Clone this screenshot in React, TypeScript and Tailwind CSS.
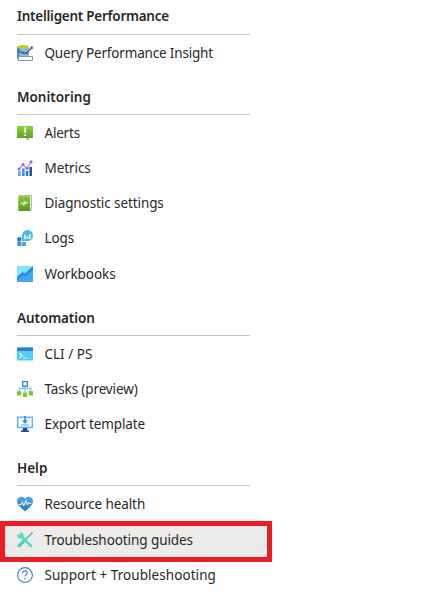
import type { ReactNode } from "react";

const Svg = ({ children }: { children: ReactNode }) => (
  <svg viewBox="0 0 16 16" className="h-4 w-4 shrink-0" fill="none">
    {children}
  </svg>
);

const QueryIcon = () => (
  <Svg>
    <path d="M0 2h12v12H0z" fill="#74c3ea" />
    <path d="M0 2h2.500v12H0z" fill="#3d9bd1" />
    <ellipse cx="6.200" cy="1.900" rx="5.800" ry="1.900" fill="#b5d22c" />
    <path d="M1.500 6l4.500 2 3.500.2L14.500 3" stroke="#7b48ae" strokeWidth="1.500" />
    <path d="M.5 4.800h2.200V7H.500zM5 6.800h2.200V9H5zM8.500 7h2.300v2.200H8.500zM13.500 1.500h2.300v2.600h-2.300z" fill="#7b48ae" />
    <path d="M1.500 11.500h14v4h-14z" fill="#fff" stroke="#939393" />
  </Svg>
);

const AlertIcon = () => (
  <Svg>
    <defs>
      <linearGradient id="alert" x1="0" y1="0" x2="0" y2="1">
        <stop stopColor="#86d633" />
        <stop offset="1" stopColor="#5e9624" />
      </linearGradient>
    </defs>
    <path d="M.5 1h15q.5 0 .5.500v11q0 .5-.5.5h-4v2.200L8.800 13H.5q-.5 0-.5-.5v-11Q0 1 .5 1z" fill="url(#alert)" />
    <path d="M7 2.500h2.200l-.3 5.500H7.300zM7.100 9.200h2v1.800h-2z" fill="#fff" />
  </Svg>
);

const MetricsIcon = () => (
  <Svg>
    <path d="M1 11h2.800v5H1z" fill="#6aaef0" />
    <path d="M5 8.500h2.600V16H5z" fill="#3c91e6" />
    <path d="M8.700 11h2.600v5H8.700z" fill="#2b76c5" />
    <path d="M12.400 7H15v9h-2.600z" fill="#1859a5" />
    <path d="M2 9l4-4.500 4 4L14 2" stroke="#b08af5" strokeWidth="1.200" />
    <g fill="#9264e6">
      <circle cx="2" cy="9" r="1.500" />
      <circle cx="6" cy="4.500" r="1.500" />
      <circle cx="10" cy="8.300" r="1.500" />
      <circle cx="14" cy="1.800" r="1.600" />
    </g>
  </Svg>
);

const DiagnosticIcon = () => (
  <Svg>
    <defs>
      <linearGradient id="diag" x1="0" y1="0" x2="0" y2="1">
        <stop stopColor="#83cc31" />
        <stop offset="1" stopColor="#5b9423" />
      </linearGradient>
    </defs>
    <path d="M2 0h12.800v14.500L13 16H2z" fill="#7aa84a" />
    <path d="M2.500.6H14.200v14h-1.200V1.400H2.500z" fill="#f0f7e6" />
    <path d="M1.300 1.300H13V16H2.200q-.9 0-.9-.9z" fill="url(#diag)" />
    <path d="M3.500 9h1.300l1-2 1 3.500 1.500-4.500.8 3 .7-1.300h1.200" stroke="#fff" strokeWidth=".85" />
  </Svg>
);

const LogsIcon = () => (
  <Svg>
    <path d="M.3 7.200h4v4.300h-4z" fill="#2875cc" />
    <path d="M.3 12h4v4h-4z" fill="#3c91e4" />
    <path d="M4.900 12h4v4h-4z" fill="#4e9df0" />
    <path d="M5 11V5.500A5.500 5.500 0 1 1 10.500 11z" fill="#45bcde" />
    <path d="M7.200 4.500h1.500V9H7.200zM9.800 6h1.400v3H9.800zM12.200 4h1.500v5h-1.500z" fill="#fff" />
  </Svg>
);

const WorkbooksIcon = () => (
  <Svg>
    <defs>
      <linearGradient id="book" x1="0" y1="0" x2="0" y2="1">
        <stop stopColor="#35a5f0" />
        <stop offset="1" stopColor="#46a8f2" />
      </linearGradient>
    </defs>
    <rect width="16" height="16" rx=".6" fill="#82e6fc" />
    <path d="M0 13l5-6 3 1.800L16 1v14.500q0 .5-.5.500H.5q-.5 0-.5-.5z" fill="url(#book)" />
    <path d="M0 11.500L5.200 6 8 7.500 16 0v4L8.700 10.500 6 9l-6 5.500z" fill="#3087df" />
  </Svg>
);

const CliIcon = () => (
  <Svg>
    <rect y="1.500" width="16" height="13" rx=".5" fill="#55cdf0" />
    <path d="M.5 1.500h15q.5 0 .5.500v3H0V2q0-.5.500-.5z" fill="#2a80d8" />
    <path d="M2.200 6.800L5.100 9.500 2.200 12.200M6 12h4.500" stroke="#e6f6fb" strokeWidth="1.100" />
  </Svg>
);

const TasksIcon = () => (
  <Svg>
    <path d="M8 5v7M2.200 11V7.500h11.600V11" stroke="#79cef1" strokeWidth="1.300" />
    <rect x="5.700" y=".7" width="4.600" height="4.600" fill="#fff" stroke="#347fd4" strokeWidth="1.300" />
    <path d="M0 10.200h4.200v4.200H0zM5.900 11.700h4.200v4.200H5.900zM11.800 10.200H16v4.200h-4.200z" fill="#83c52d" />
  </Svg>
);

const ExportIcon = () => (
  <Svg>
    <rect x=".7" y="1.200" width="14.600" height="10.300" fill="#f6fcff" stroke="#62b5ec" strokeWidth="1.400" />
    <path d="M7.200 0h1.600v4.500h2.400L8 7.800 4.800 4.500h2.400z" fill="#3187dc" />
    <path d="M3.800 9h8.400" stroke="#7abef1" strokeWidth="1.300" />
    <path d="M6 12h4l.5 2.600H12V16H4v-1.400h1.500z" fill="#234c98" />
  </Svg>
);

const HealthIcon = () => (
  <Svg>
    <defs>
      <linearGradient id="heart" x1="0" y1="0" x2="0" y2="1">
        <stop stopColor="#52a7e9" />
        <stop offset="1" stopColor="#2577c8" />
      </linearGradient>
    </defs>
    <path d="M8 15.500C5 12.800 0 9.500 0 5 0 1.200 5.500-1 8 2.700 10.500-1 16 1.200 16 5c0 4.500-5 7.800-8 10.500z" fill="url(#heart)" />
    <path d="M1.800 8.500h2.400l1.200-2.700 1.300 4.200 2.200-5.500 1.500 4.300 1.200-2.500.8 1h2" stroke="#fff" strokeWidth="1" />
  </Svg>
);

const ToolsIcon = () => (
  <Svg>
    <path d="M15.600.4L7.500 8.500" stroke="#40bba2" strokeWidth="1.300" />
    <path d="M7 9l-5 5" stroke="#48ceb1" strokeWidth="3" strokeLinecap="round" />
    <path d="M4.500 4.500L14 14" stroke="#55dcc0" strokeWidth="2.800" strokeLinecap="round" />
    <path d="M3 .2l-.3 2.500L1 3 .1 2.500C-.3 5 1.500 7 4 6.500l2.500-2C6.800 1.800 5 .1 3 .2z" fill="#55dcc0" />
  </Svg>
);

const HelpIcon = () => (
  <Svg>
    <circle cx="8" cy="8" r="7.400" stroke="#3c7ed2" strokeWidth="1.100" />
    <path d="M5.700 6.300C5.600 3 10.500 3.200 10.300 6c-.1 1.700-2.200 1.900-2.200 3.500" stroke="#3c7ed2" strokeWidth="1.200" />
    <path d="M7.400 10.900h1.400v1.300H7.400z" fill="#3c7ed2" />
  </Svg>
);

const Heading = ({ children, className }: { children: ReactNode; className: string }) => (
  <h2 className={`ml-[17px] flex w-[233px] items-center border-b border-[#c8c6c4] text-[13.5px] leading-5 font-semibold whitespace-nowrap ${className}`}>
    {children}
  </h2>
);

const Item = ({ icon, label, className }: { icon: ReactNode; label: string; className: string }) => (
  <li className={`flex items-center gap-[11.5px] pl-[17px] text-[13.5px] leading-5 whitespace-nowrap ${className}`}>
    {icon}
    <span>{label}</span>
  </li>
);

export default function App() {
  return (
    <nav className="relative h-[602px] w-[428px] overflow-hidden bg-white font-['Noto_Sans',sans-serif] text-[#292827]">
      <Heading className="h-[35px] pb-0.5 tracking-[-0.26px]">Intelligent Performance</Heading>
      <ul>
        <Item className="h-9 tracking-[-0.17px]" icon={<QueryIcon />} label="Query Performance Insight" />
      </ul>
      <Heading className="h-11 pt-[9px]">Monitoring</Heading>
      <ul>
        <Item className="h-9 tracking-[-0.2px]" icon={<AlertIcon />} label="Alerts" />
        <Item className="h-[35px] pb-px tracking-[-0.08px]" icon={<MetricsIcon />} label="Metrics" />
        <Item className="h-[35px] pb-px tracking-[-0.09px]" icon={<DiagnosticIcon />} label="Diagnostic settings" />
        <Item className="h-[35px] pb-px tracking-[-0.1px]" icon={<LogsIcon />} label="Logs" />
        <Item className="h-9 tracking-[-0.04px]" icon={<WorkbooksIcon />} label="Workbooks" />
      </ul>
      <Heading className="h-11 pt-[9px] tracking-[-0.08px]">Automation</Heading>
      <ul>
        <Item className="h-9" icon={<CliIcon />} label="CLI / PS" />
        <Item className="h-[35px] pb-px tracking-[-0.13px]" icon={<TasksIcon />} label="Tasks (preview)" />
        <Item className="h-[35px] pb-px tracking-[-0.1px]" icon={<ExportIcon />} label="Export template" />
      </ul>
      <Heading className="h-11 pt-[9px]">Help</Heading>
      <ul>
        <Item className="h-9 tracking-[-0.1px]" icon={<HealthIcon />} label="Resource health" />
        <Item className="h-[35px] w-[265px] bg-[#edebe9] tracking-[-0.08px]" icon={<ToolsIcon />} label="Troubleshooting guides" />
        <Item className="h-[35px] pt-px tracking-[0.06px]" icon={<HelpIcon />} label="Support + Troubleshooting" />
      </ul>
      <div className="pointer-events-none absolute top-[521px] left-0 h-[41px] w-[272px] border-5 border-[#ed1c24]" />
    </nav>
  );
}
